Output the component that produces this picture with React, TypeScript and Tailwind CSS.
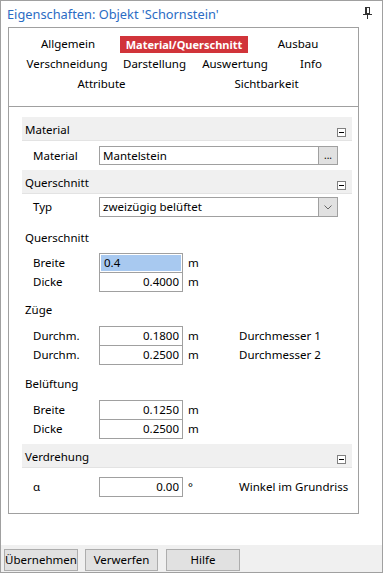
import React from "react";

const F = "font-['Segoe_UI','Noto_Sans',sans-serif]";

function Collapse() {
  return (
    <div className="w-[9px] h-[9px] border border-[#808080] bg-white flex items-center justify-center">
      <div className="w-[5px] h-px bg-black" />
    </div>
  );
}

function Header({ title, mt }: { title: string; mt: string }) {
  return (
    <div className={`${mt} h-[24px] bg-[#f0f0f0] border-b border-[#e3e3e3] flex items-start justify-between`}>
      <span className="pl-[3px] pt-[5px] leading-[15px]">{title}</span>
      <div className="pr-[6px] pt-[11px]">
        <Collapse />
      </div>
    </div>
  );
}

function Sub({ title, mt }: { title: string; mt: string }) {
  return <div className={`${mt} h-[20px] leading-[20px] pl-[3px]`}>{title}</div>;
}

function NumRow({
  label,
  value,
  unit = "m",
  desc,
  first,
  highlight,
}: {
  label: string;
  value: string;
  unit?: string;
  desc?: string;
  first?: boolean;
  highlight?: boolean;
}) {
  return (
    <div className={`flex items-center h-[20px] whitespace-nowrap ${first ? "" : "-mt-px"}`}>
      <div className="w-[77px] pl-[11px] leading-[20px]">{label}</div>
      <div className="w-[84px] h-[20px] border border-[#a0a0a0] bg-white p-px">
        {highlight ? (
          <div className="h-full bg-[#a8c9f0] pl-[3px] leading-[16px]">{value}</div>
        ) : (
          <div className="h-full text-right pr-[2px] leading-[16px]">{value}</div>
        )}
      </div>
      <div className="w-[56px] pl-[5px] leading-[20px]">{unit}</div>
      {desc && <div className="leading-[20px]">{desc}</div>}
    </div>
  );
}

function Pin() {
  return (
    <svg width="9" height="12" viewBox="0 0 9 12" className="block">
      <rect x="2.5" y="0.5" width="4" height="6" fill="none" stroke="#333" strokeWidth="1" />
      <line x1="3.5" y1="0.5" x2="3.5" y2="7" stroke="#333" strokeWidth="1" />
      <line x1="0" y1="7.5" x2="9" y2="7.5" stroke="#333" strokeWidth="1" />
      <line x1="4.5" y1="8" x2="4.5" y2="12" stroke="#333" strokeWidth="1" />
    </svg>
  );
}

export default function App() {
  return (
    <div className={`${F} w-[383px] h-[573px] border border-[#a0a0a0] bg-white flex flex-col text-[11.5px] text-black`}>
      {/* title */}
      <div className="h-[26px] flex items-center justify-between pl-[6px] pr-[10px]">
        <span className="text-[12.8px] text-[#2b6cc4] leading-[18px] -mt-[1px]">Eigenschaften: Objekt 'Schornstein'</span>
        <div className="-mt-[3px]">
          <Pin />
        </div>
      </div>

      {/* panel */}
      <div className="ml-[7px] w-[351px] h-[487px] border border-[#a0a0a0] flex flex-col">
        {/* tabs */}
        <div className="pt-[6px] pb-[12px] border-b border-[#a0a0a0]">
          <div className="grid grid-cols-[118px_114px_114px] h-[20px] items-center">
            <div className="flex justify-center">Allgemein</div>
            <div className="flex justify-center">
              <span className="shrink-0 whitespace-nowrap bg-[#d1343a] text-white font-bold text-[11px] px-[6px] h-[17px] leading-[17px]">
                Material/Querschnitt
              </span>
            </div>
            <div className="flex justify-center">Ausbau</div>
          </div>
          <div className="grid grid-cols-[96px_79px_82px_70px] pl-[10px] h-[20px] items-center text-center">
            <div>Verschneidung</div>
            <div>Darstellung</div>
            <div>Auswertung</div>
            <div>Info</div>
          </div>
          <div className="grid grid-cols-[87px_55px_133px] pl-[49px] h-[20px] items-center text-center">
            <div>Attribute</div>
            <div />
            <div>Sichtbarkeit</div>
          </div>
        </div>

        {/* content */}
        <div className="pt-[10px] pl-[13px] pr-[6px] flex flex-col">
          <Header title="Material" mt="mt-0" />
          <div className="mt-[5px] flex items-center h-[19px]">
            <div className="w-[77px] pl-[11px]">Material</div>
            <div className="w-[239px] h-[19px] border border-[#a0a0a0] flex">
              <div className="flex-1 pl-[3px] leading-[17px]">Mantelstein</div>
              <div className="w-[19px] bg-[#e1e1e1] border-l border-[#a0a0a0] text-center leading-[17px] text-[10px]">...</div>
            </div>
          </div>

          <Header title="Querschnitt" mt="mt-[5px]" />
          <div className="mt-[3px] flex items-center h-[20px]">
            <div className="w-[77px] pl-[11px]">Typ</div>
            <div className="w-[239px] h-[20px] border border-[#a0a0a0] flex">
              <div className="flex-1 pl-[3px] leading-[18px]">zweizügig belüftet</div>
              <div className="w-[19px] bg-[#e1e1e1] border-l border-[#a0a0a0] flex items-center justify-center">
                <svg width="8" height="5" viewBox="0 0 8 5">
                  <path d="M0.5 0.5 L4 4 L7.5 0.5" fill="none" stroke="#666" strokeWidth="1" />
                </svg>
              </div>
            </div>
          </div>

          <Sub title="Querschnitt" mt="mt-[11px]" />
          <div className="mt-[5px]">
            <NumRow label="Breite" value="0.4" first highlight />
            <NumRow label="Dicke" value="0.4000" />
          </div>

          <Sub title="Züge" mt="mt-[8px]" />
          <div className="mt-[6px]">
            <NumRow label="Durchm." value="0.1800" desc="Durchmesser 1" first />
            <NumRow label="Durchm." value="0.2500" desc="Durchmesser 2" />
          </div>

          <Sub title="Belüftung" mt="mt-[9px]" />
          <div className="mt-[6px]">
            <NumRow label="Breite" value="0.1250" first />
            <NumRow label="Dicke" value="0.2500" />
          </div>

          <Header title="Verdrehung" mt="mt-[5px]" />
          <div className="mt-[9px]">
            <NumRow label="α" value="0.00" unit="°" desc="Winkel im Grundriss" first />
          </div>
        </div>
      </div>

      <div className="flex-1" />

      {/* bottom bar */}
      <div className="h-[27px] bg-[#f0f0f0] pl-[3px] pt-[4px] flex items-start">
        <button className="w-[74px] h-[22px] bg-[#e1e1e1] border border-[#adadad] leading-[20px]">Übernehmen</button>
        <button className="ml-[7px] w-[73px] h-[22px] bg-[#e1e1e1] border border-[#adadad] leading-[20px]">Verwerfen</button>
        <button className="ml-[8px] w-[74px] h-[22px] bg-[#e1e1e1] border border-[#adadad] leading-[20px]">Hilfe</button>
      </div>
    </div>
  );
}
